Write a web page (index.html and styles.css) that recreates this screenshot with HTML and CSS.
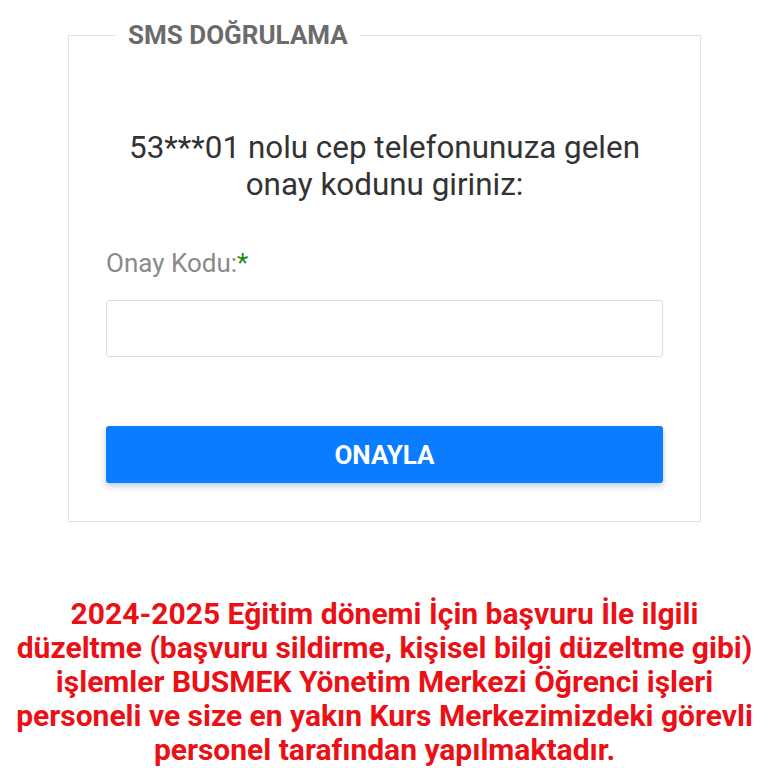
FILE: index.html
```html
<!DOCTYPE html>
<html lang="tr">
<head>
<meta charset="utf-8">
<title>SMS Doğrulama</title>
<link rel="stylesheet" href="styles.css">
</head>
<body>
<main class="page">
  <fieldset class="box">
    <legend class="box-title">SMS DOĞRULAMA</legend>
    <p class="intro">53***01 nolu cep telefonunuza gelen<br>onay kodunu giriniz:</p>
    <label class="field-label" for="code">Onay Kodu:<span class="req">*</span></label>
    <input class="field-input" id="code" type="text">
    <button class="btn" type="button">ONAYLA</button>
  </fieldset>
  <p class="notice">2024-2025 Eğitim dönemi İçin başvuru İle ilgili<br>düzeltme (başvuru sildirme, kişisel bilgi düzeltme gibi)<br>işlemler BUSMEK Yönetim Merkezi Öğrenci işleri<br>personeli ve size en yakın Kurs Merkezimizdeki görevli<br>personel tarafından yapılmaktadır.</p>
</main>
</body>
</html>
```
FILE: styles.css
```css
* { box-sizing: border-box; }
html, body { margin: 0; padding: 0; background: #fff; }
body { font-family: Roboto, "Noto Sans", sans-serif; }
.page {
  padding: 20px 67px 0 68px;
}
.box {
  margin: 0;
  border: 1px solid #e2e2e2;
  padding: 0 37px 38px 37px;
  display: flex;
  flex-direction: column;
}
.box-title {
  margin-left: 10px;
  padding: 0 12px;
  font-size: 26px;
  line-height: 30px;
  font-weight: 700;
  color: #6b6b6b;
}
.intro {
  margin: 79px 0 0 0;
  text-align: center;
  font-size: 31.4px;
  line-height: 37px;
  color: #333;
}
.field-label {
  margin-top: 45px;
  font-size: 26px;
  line-height: 30px;
  color: #8a8a8a;
}
.req { color: #1d8a1d; }
.field-input {
  margin-top: 22px;
  height: 57px;
  width: 100%;
  border: 1px solid #dedede;
  border-radius: 3px;
  font-size: 22px;
  padding: 0 12px;
  font-family: inherit;
}
.btn {
  margin-top: 69px;
  height: 57px;
  width: 100%;
  border: 0;
  border-radius: 3px;
  background: #0a7cff;
  color: #fff;
  font-family: inherit;
  font-size: 26px;
  font-weight: 700;
  box-shadow: 0 3px 6px rgba(0, 60, 140, 0.28);
}
.notice {
  margin: 75px -68px 0 -68px;
  text-align: center;
  font-size: 30px;
  line-height: 34px;
  font-weight: 700;
  color: #ea1015;
}
```
